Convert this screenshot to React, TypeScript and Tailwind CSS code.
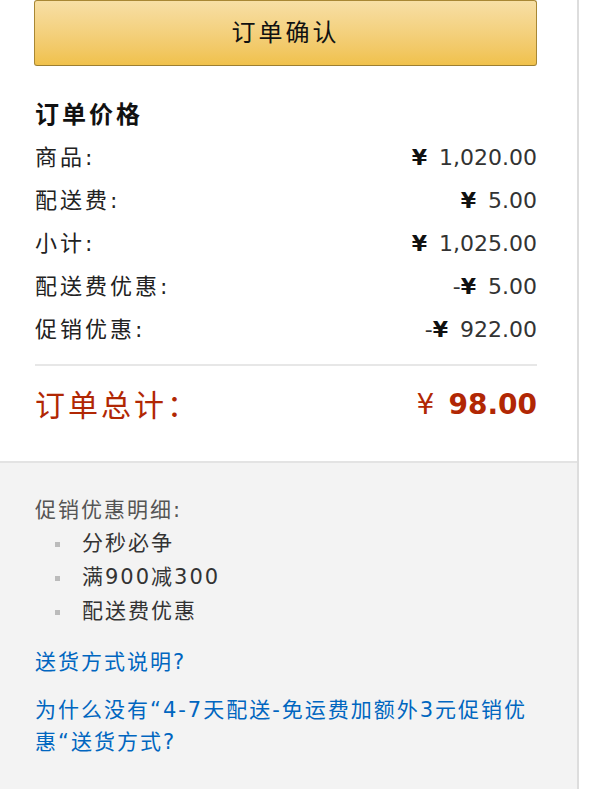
const font = { fontFamily: '"DejaVu Sans", "Noto Sans CJK SC", sans-serif' };

type Line = { label: string; sign?: string; amount: string };

const lines: Line[] = [
  { label: "商品:", amount: "1,020.00" },
  { label: "配送费:", amount: "5.00" },
  { label: "小计:", amount: "1,025.00" },
  { label: "配送费优惠:", sign: "-", amount: "5.00" },
  { label: "促销优惠:", sign: "-", amount: "922.00" },
];

const promos = ["分秒必争", "满900减300", "配送费优惠"];

export default function App() {
  return (
    <div className="w-[600px] h-[789px] bg-white overflow-hidden" style={font}>
      <div className="w-[579px] h-full border-r-2 border-[#dddddd] flex flex-col">
        {/* Summary */}
        <div className="pl-[34px] pr-[40px] pb-[17px] border-b-2 border-[#e3e3e3]">
          <button className="w-full h-[66px] rounded-[3px] border border-[#a88734] border-b-[#9c7e31] bg-gradient-to-b from-[#f7dfa5] to-[#f0c14b] text-[24px] tracking-[3px] text-[#111111] flex items-center justify-center">
            订单确认
          </button>

          <div className="pl-px">
            <h2 className="mt-[34px] text-[24px] leading-[30px] font-bold tracking-[3px] text-[#111111]">
              订单价格
            </h2>
            <div className="mt-[6px] flex flex-col">
              {lines.map((l) => (
                <div key={l.label} className="h-[43px] flex items-center justify-between text-[22px] text-[#222222]">
                  <span className="tracking-[3px]">{l.label}</span>
                  <span className="flex items-center text-[#333333]">
                    {l.sign}
                    <span className="text-[#111111] font-bold mr-[12px]">¥</span>
                    {l.amount}
                  </span>
                </div>
              ))}
            </div>
            <div className="mt-[13px] border-t-2 border-[#e7e7e7]" />
            <div className="h-[78px] flex items-center justify-between text-[#b12704]">
              <span className="text-[30px] tracking-[3px]">订单总计：</span>
              <span className="text-[28px] font-bold">
                <span className="font-normal mr-[14px]">¥</span>98.00
              </span>
            </div>
          </div>
        </div>

        {/* Promotions and delivery notes */}
        <div className="flex-1 bg-[#f3f3f3] pl-[35px] pr-[40px] pt-[30px] tracking-[2px]">
          <div className="text-[21px] leading-[34px] text-[#555555]">促销优惠明细:</div>
          <ul className="flex flex-col">
            {promos.map((p) => (
              <li key={p} className="h-[34px] flex items-center text-[21px] text-[#333333]">
                <span className="w-[5px] h-[5px] bg-[#bbbbbb] ml-[20px] mr-[22px]" />
                {p}
              </li>
            ))}
          </ul>
          <a className="mt-[16px] block text-[21px] leading-[34px] text-[#0066c0]">送货方式说明?</a>
          <a className="mt-[15px] block text-[21px] leading-[32px] text-[#0066c0]">
            为什么没有“4-7天配送-免运费加额外3元促销优惠“送货方式?
          </a>
        </div>
      </div>
    </div>
  );
}
